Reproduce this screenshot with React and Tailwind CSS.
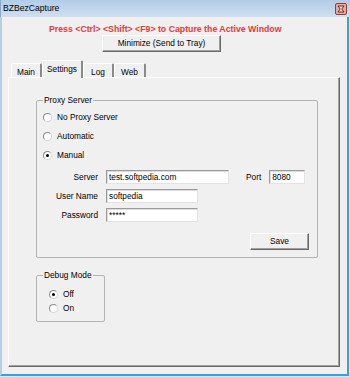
import React from 'react';

const font = { fontFamily: '"Liberation Sans", Arial, sans-serif' };

const Radio = ({ label, checked }) => (
  <div className="flex items-center h-[12px]">
    <span className="relative w-[9px] h-[9px] rounded-full bg-white border border-[#8a8a8a] border-r-[#d8d8d8] border-b-[#d8d8d8] flex items-center justify-center">
      {checked && <span className="w-[3px] h-[3px] rounded-full bg-black" />}
    </span>
    <span className="ml-[5px] text-[8.3px] leading-[12px] text-black">{label}</span>
  </div>
);

const Field = ({ value, w }) => (
  <div
    className="h-[14px] bg-white border border-[#9a9a9a] border-r-[#e3e3e3] border-b-[#e3e3e3] shadow-[inset_1px_1px_0_#dcdcdc] pl-[2px] text-[8.3px] leading-[12px] text-black overflow-hidden whitespace-nowrap"
    style={{ width: w }}
  >
    {value}
  </div>
);

const Button = ({ children, className = '' }) => (
  <div
    className={`h-[17px] bg-[#f0f0f0] border border-white border-r-[#696969] border-b-[#696969] shadow-[inset_-1px_-1px_0_#a0a0a0] flex items-center justify-center text-[8.3px] text-black ${className}`}
  >
    {children}
  </div>
);

const Tab = ({ label, active, w }) => (
  <div
    className={
      active
        ? 'relative z-10 -mb-px h-[18px] bg-[#f0f0f0] border-t border-l border-white border-r-2 border-r-[#8a8a8a] rounded-t-[2px] flex items-start justify-center pt-[2px] text-[8.3px] text-black'
        : 'h-[14px] bg-[#f0f0f0] border-t border-l border-white border-r-2 border-r-[#8a8a8a] rounded-t-[2px] flex items-start justify-center pt-[2px] text-[8.3px] text-black'
    }
    style={{ width: w }}
  >
    {label}
  </div>
);

export default function App() {
  return (
    <div className="w-[350px] h-[377px] flex flex-col bg-[#dbe7f3] overflow-hidden" style={font}>
      {/* title bar */}
      <div className="h-[17px] flex items-center justify-between bg-gradient-to-b from-[#b2cce7] to-[#cfe0f1] border-l border-[#8ea8c4]">
        <span className="ml-[2px] text-[8.6px] text-black">BZBezCapture</span>
        <div className="mr-[3px] w-[12px] h-[12px] rounded-[2px] border border-[#9c3a34] bg-[#e7aaa3] flex items-center justify-center">
          <svg width="8" height="8" viewBox="0 0 8 8">
            <path d="M1 1h6L4.8 4 7 7H1l2.2-3z" fill="#f4d6d2" stroke="#5a1e1a" strokeWidth="0.9" />
          </svg>
        </div>
      </div>

      {/* body */}
      <div className="flex-1 flex flex-col bg-[#f0f0f0] border-l-2 border-l-[#b9cee4] border-r-2 border-r-[#3aa0e0] border-b-2 border-b-[#3aa0e0] mb-[1px] mr-[1px]">
        <div className="mt-[6px] ml-[47px] h-[12px] leading-[12px] text-[8.75px] font-bold text-[#e23b3b] whitespace-nowrap">
          Press &lt;Ctrl&gt; &lt;Shift&gt; &lt;F9&gt; to Capture the Active Window
        </div>
        <Button className="ml-[100px] w-[119px]">Minimize (Send to Tray)</Button>

        {/* tabs */}
        <div className="mt-[8px] ml-[9px] h-[17px] flex items-end">
          <Tab label="Main" w={31} />
          <Tab label="Settings" w={41} active />
          <Tab label="Log" w={31} />
          <Tab label="Web" w={32} />
        </div>

        {/* tab panel */}
        <div className="ml-[6px] w-[332px] h-[290px] border border-white border-r-[#696969] border-b-[#696969] shadow-[inset_-1px_-1px_0_#a0a0a0] flex flex-col">
          {/* proxy server group */}
          <div className="relative mt-[22px] ml-[27px] w-[282px] h-[158px] border border-[#b4b4b4] rounded-[2px] flex flex-col">
            <span className="absolute -top-[7px] left-[6px] px-[1px] bg-[#f0f0f0] text-[8.3px] leading-[12px] text-black">
              Proxy Server
            </span>
            <div className="mt-[10px] ml-[6px] flex flex-col gap-[7px]">
              <Radio label="No Proxy Server" />
              <Radio label="Automatic" />
              <Radio label="Manual" checked />
            </div>

            <div className="mt-[9px] flex flex-col gap-[5px] text-[8.3px] text-black">
              <div className="flex items-center">
                <span className="w-[61px] text-right">Server</span>
                <div className="ml-[8px]"><Field value="test.softpedia.com" w={123} /></div>
                <span className="ml-[17px]">Port</span>
                <div className="ml-[8px]"><Field value="8080" w={36} /></div>
              </div>
              <div className="flex items-center">
                <span className="w-[61px] text-right">User Name</span>
                <div className="ml-[8px]"><Field value="softpedia" w={92} /></div>
              </div>
              <div className="flex items-center">
                <span className="w-[61px] text-right">Password</span>
                <div className="ml-[8px]"><Field value="*****" w={92} /></div>
              </div>
            </div>

            <Button className="self-end mt-[11px] mr-[8px] w-[59px]">Save</Button>
          </div>

          {/* debug mode group */}
          <div className="relative mt-[17px] ml-[27px] w-[69px] h-[47px] border border-[#b4b4b4] rounded-[2px] flex flex-col">
            <span className="absolute -top-[7px] left-[6px] px-[1px] bg-[#f0f0f0] text-[8.3px] leading-[12px] text-black">
              Debug Mode
            </span>
            <div className="mt-[12px] ml-[12px] flex flex-col gap-[2px]">
              <Radio label="Off" checked />
              <Radio label="On" />
            </div>
          </div>
        </div>
      </div>
    </div>
  );
}
